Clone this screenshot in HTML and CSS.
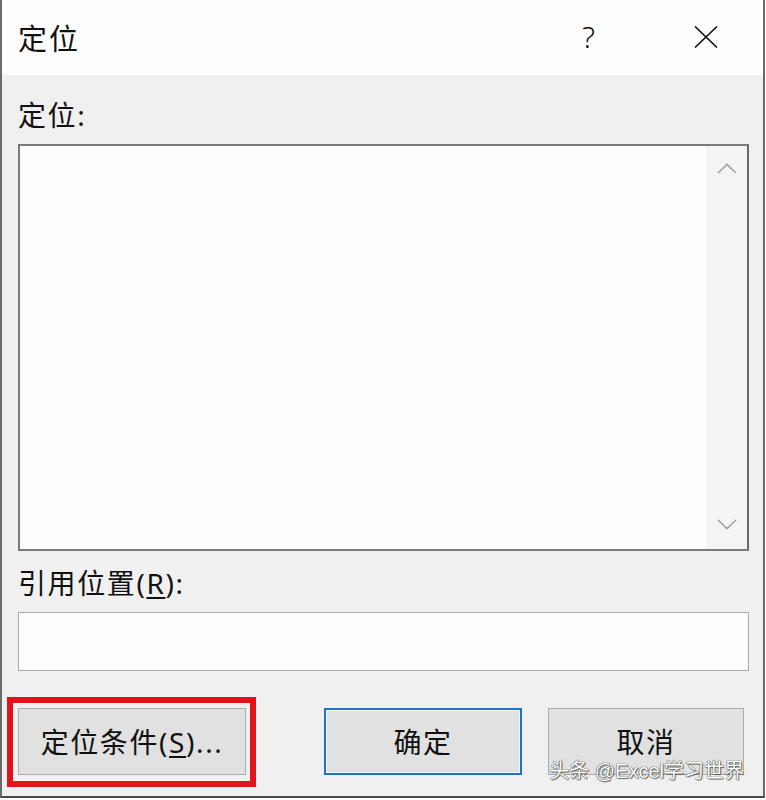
FILE: index.html
```html
<!DOCTYPE html>
<html lang="zh-CN">
<head>
<meta charset="utf-8">
<title>定位</title>
<link rel="stylesheet" href="styles.css">
</head>
<body>
<div class="window">
  <div class="titlebar">
    <span class="title">定位</span>
    <div class="controls">
      <span class="help">?</span>
      <span class="close">
        <svg width="24" height="22" viewBox="0 0 24 22"><path d="M1 0.5 L23 21.5 M23 0.5 L1 21.5" stroke="#111" stroke-width="1.6" fill="none"/></svg>
      </span>
    </div>
  </div>
  <div class="content">
    <div class="label">定位:</div>
    <div class="listbox">
      <div class="list-area"></div>
      <div class="scrollbar">
        <svg width="20" height="11" viewBox="0 0 20 11"><polyline points="1,10 10,1.5 19,10" stroke="#a3a3a3" stroke-width="1.7" fill="none"/></svg>
        <svg width="20" height="11" viewBox="0 0 20 11"><polyline points="1,1 10,9.5 19,1" stroke="#a3a3a3" stroke-width="1.7" fill="none"/></svg>
      </div>
    </div>
    <div class="label label-ref">引用位置(<u>R</u>):</div>
    <div class="input"></div>
    <div class="buttons">
      <div class="btn-wrap">
        <button class="btn btn-special">定位条件(<u>S</u>)...</button>
        <span class="highlight"></span>
      </div>
      <button class="btn btn-default">确定</button>
      <button class="btn btn-cancel">取消</button>
    </div>
    <span class="watermark">头条 @Excel学习世界</span>
  </div>
</div>
</body>
</html>
```
FILE: styles.css
```css
html, body {
  margin: 0;
  padding: 0;
  background: #ffffff;
}

body {
  font-family: "Noto Sans", "Noto Sans CJK SC", sans-serif;
  color: #111;
}

.window {
  width: 765px;
  height: 798px;
  box-sizing: border-box;
  border-left: 2px solid #6b6b6b;
  border-right: 2px solid #6b6b6b;
  border-bottom: 2px solid #4a4a4a;
  display: flex;
  flex-direction: column;
  background: #f0f0f0;
}

.titlebar {
  height: 75px;
  flex: none;
  background: #fdfdfd;
  display: flex;
  align-items: center;
  padding-left: 16px;
}

.title {
  font-family: "Noto Sans CJK SC", sans-serif;
  font-size: 29px;
  letter-spacing: 2px;
  line-height: 40px;
  margin-top: -2px;
}

.controls {
  margin-left: auto;
  display: flex;
  align-items: center;
  margin-right: 45px;
}

.help {
  font-family: "Noto Sans", sans-serif;
  font-weight: 300;
  font-size: 30px;
  line-height: 40px;
  margin-right: 99px;
  margin-top: -2px;
}

.close {
  display: flex;
  width: 24px;
  height: 22px;
  margin-top: -2px;
}

.content {
  flex: 1;
  position: relative;
  display: flex;
  flex-direction: column;
  padding: 20px 14px 0 16px;
}

.label {
  font-family: "Noto Sans", "Noto Sans CJK SC", sans-serif;
  font-size: 28px;
  letter-spacing: 1.6px;
  line-height: 40px;
  height: 40px;
}

.label u, .btn u {
  text-decoration-thickness: 1.5px;
  text-underline-offset: 3px;
}

.listbox {
  margin-top: 9px;
  height: 407px;
  box-sizing: border-box;
  border: 2px solid #7a7a7a;
  border-right-color: #6a6a6a;
  background: #fdfdfd;
  display: flex;
}

.list-area {
  flex: 1;
}

.scrollbar {
  width: 41px;
  background: #f4f4f4;
  display: flex;
  flex-direction: column;
  align-items: center;
  justify-content: space-between;
  padding: 17px 0 19px;
}

.label-ref {
  margin-top: 12px;
}

.input {
  margin-top: 9px;
  height: 59px;
  box-sizing: border-box;
  border: 1px solid #a9a9a9;
  background: #fdfdfd;
}

.buttons {
  margin-top: 37px;
  display: flex;
  align-items: flex-start;
}

.btn {
  height: 67px;
  box-sizing: border-box;
  background: #e1e1e1;
  border: 1px solid #adadad;
  font-family: "Noto Sans", "Noto Sans CJK SC", sans-serif;
  font-size: 28px;
  letter-spacing: 1.6px;
  line-height: 30px;
  color: #111;
  padding: 0;
  margin: 0;
  display: flex;
  align-items: center;
  justify-content: center;
}

.btn-wrap {
  position: relative;
  display: flex;
}

.btn-special {
  width: 228px;
}

.highlight {
  position: absolute;
  left: -11px;
  top: -11px;
  right: -10px;
  bottom: -12px;
  border: 6px solid #e3131c;
  box-shadow: inset 0 0 0 1px #f6f6f6;
  pointer-events: none;
}

.btn-default {
  width: 198px;
  margin-left: 78px;
  border: 2px solid #1f73c9;
  box-shadow: inset 0 0 0 1px #f3f6fa;
}

.btn-cancel {
  width: 196px;
  margin-left: 26px;
}

.watermark {
  position: absolute;
  right: 19px;
  bottom: 17px;
  font-family: "Liberation Sans", "Noto Sans CJK SC", sans-serif;
  font-size: 20px;
  color: #ffffff;
  line-height: 16px;
  text-shadow: 0 0 1px #3a3a3a, 0 0 1px #3a3a3a, 1px 1px 1px rgba(0,0,0,0.5);
  white-space: nowrap;
}
```
